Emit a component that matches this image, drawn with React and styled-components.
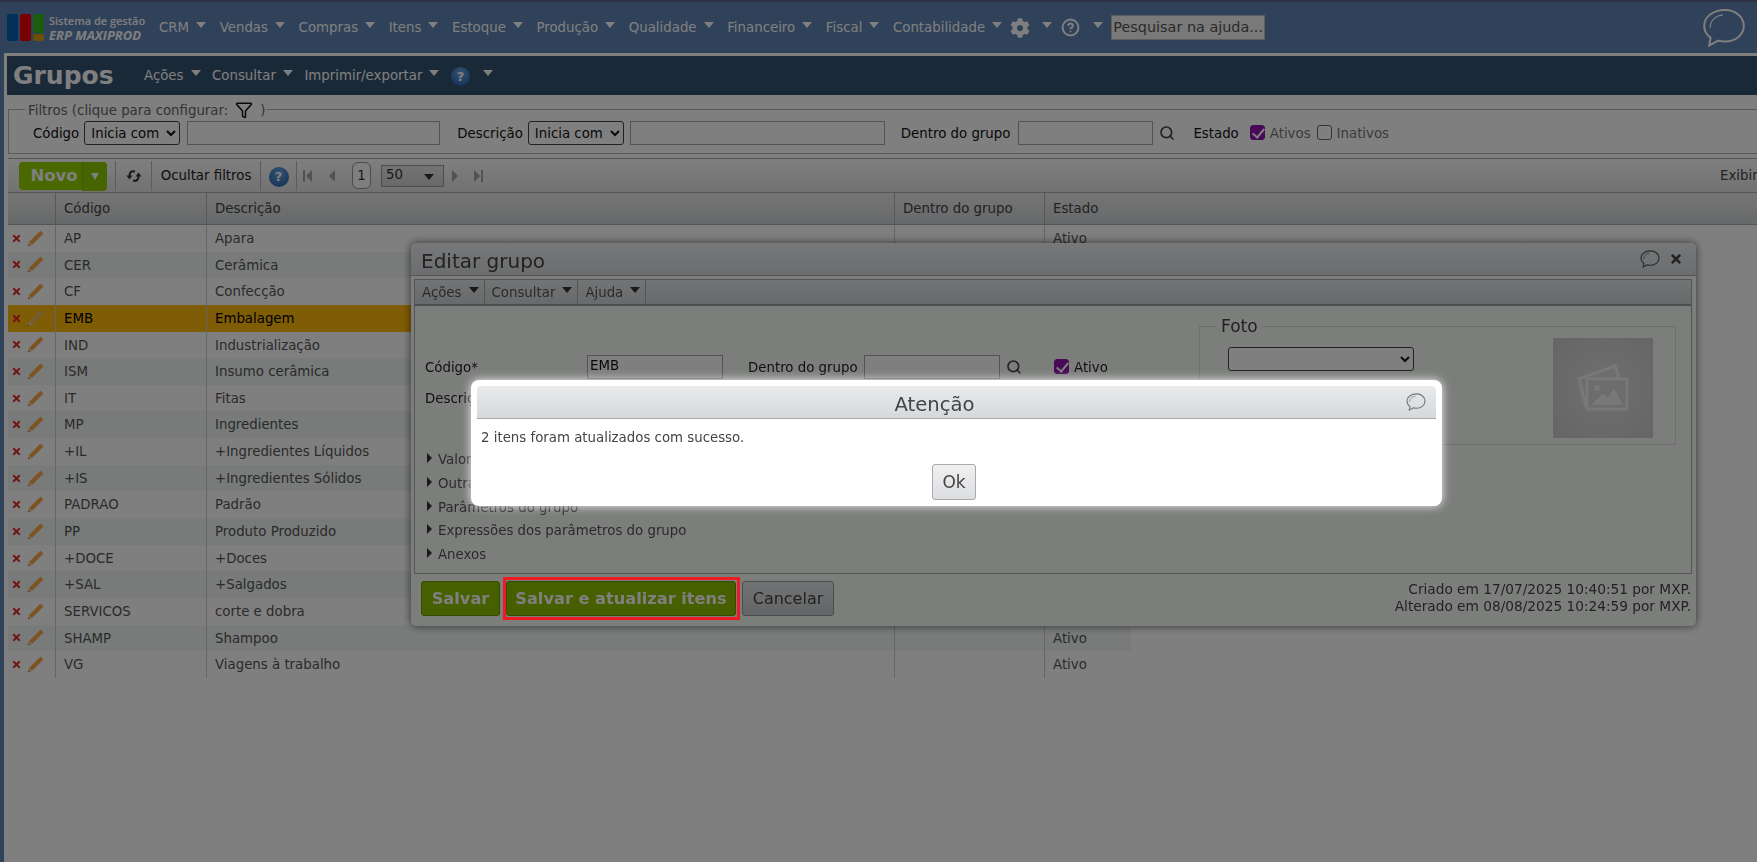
import React from 'react';
import styled, { createGlobalStyle } from 'styled-components';
import { FaCog, FaTimes } from 'react-icons/fa';
import { CircleHelp, Funnel, Search } from 'lucide-react';

const GlobalStyle = createGlobalStyle`
  html, body { margin: 0; padding: 0; height: 100%; overflow: hidden; }
  body { font-family: "DejaVu Sans", sans-serif; font-size: 13.33px; color: #555; background: #5e84b2; }
  * { box-sizing: border-box; }
`;

const Shell = styled.div`
  width: 1757px;
  height: 862px;
  overflow: hidden;
  background: #5e84b2;
  border-top: 2px solid #5a6288;
`;

const TopBar = styled.header`
  height: 51px;
  display: flex;
  align-items: center;
  padding-left: 7px;
`;

const Logo = styled.div`
  display: flex;
  align-items: center;
  gap: 5px;
  width: 152px;
  flex: none;
`;

const LogoMark = styled.div`
  display: grid;
  grid-template-columns: 11px 11px 11px;
  grid-template-rows: 19px 7px;
  gap: 1px 2px;
`;

const LogoBlock = styled.span`
  background: ${p => p.$color};
  border-radius: 2px;
  grid-row: ${p => p.$row || 'auto'};
`;

const LogoText = styled.div`
  font-family: "Open Sans", sans-serif;
  color: #fff;
  display: flex;
  flex-direction: column;
  line-height: 15px;
  font-size: 11px;
  font-weight: 600;
  white-space: nowrap;
  strong { font-size: 13px; font-style: italic; font-weight: 700; }
`;

const Nav = styled.nav`
  display: flex;
  align-items: center;
  gap: 13.6px;
`;

const NavItem = styled.span`
  display: flex;
  align-items: center;
  gap: ${p => p.$gap || 7}px;
  margin-left: ${p => p.$ml || 0}px;
  color: #fff;
  white-space: nowrap;
`;

const Caret = styled.i`
  display: block;
  width: 0;
  height: 0;
  border-left: 5px solid transparent;
  border-right: 5px solid transparent;
  border-top: 6px solid ${p => p.$color || '#fff'};
  margin-top: ${p => p.$mt === undefined ? -5 : p.$mt}px;
`;

const HelpSearch = styled.div`
  width: 154px;
  height: 25px;
  margin-left: 8px;
  background: #f2f2f2;
  border: 1px solid #bbb;
  color: #555;
  font-size: 14.4px;
  line-height: 23px;
  padding-left: 1px;
  white-space: nowrap;
  overflow: hidden;
`;

const TopBubble = styled.div`
  margin-left: auto;
  margin-right: 11px;
  display: flex;
`;

const Panel = styled.main`
  margin-left: 4px;
  padding: 3px 0 0 3px;
  background: #fff;
  height: 809px;
`;

const TitleBar = styled.div`
  height: 39px;
  background: #345270;
  display: flex;
  align-items: center;
  padding-left: 6px;
`;

const PageTitle = styled.h1`
  margin: 0 30px 0 0;
  width: 101px;
  font-size: 25px;
  font-weight: 700;
  color: #fff;
  line-height: 39px;
`;

const SubNav = styled.nav`
  display: flex;
  align-items: center;
  gap: 11.5px;
`;

const HelpBadge = styled.span`
  width: ${p => p.$size || 19}px;
  height: ${p => p.$size || 19}px;
  margin-top: 2px;
  border-radius: 50%;
  background: radial-gradient(circle at 50% 30%, #6aa4e0, #1e5caa);
  color: #fff;
  font-weight: 700;
  font-size: 13px;
  display: flex;
  align-items: center;
  justify-content: center;
  flex: none;
`;

const FilterSet = styled.fieldset`
  margin: 3px 0 0 1px;
  padding: 0 0 0 16px;
  height: 56px;
  border: 1px solid #b4b4b4;
  border-right: none;
`;

const FilterLegend = styled.legend`
  margin-left: 0;
  padding: 2px 1px 0 3px;
  display: flex;
  align-items: center;
  gap: 7px;
  height: 22px;
  color: #666;
  white-space: nowrap;
`;

const FilterRow = styled.div`
  display: flex;
  align-items: center;
  height: 26px;
  margin: 0 0 0 8px;
`;

const FieldLabel = styled.label`
  color: #111;
  margin-left: ${p => p.$ml || 0}px;
  margin-right: ${p => p.$mr === undefined ? 5 : p.$mr}px;
  white-space: nowrap;
`;

const Select = styled.select`
  width: ${p => p.$w}px;
  height: 24px;
  border: 1px solid #444;
  border-radius: 3px;
  background: #fff;
  font-family: "DejaVu Sans", sans-serif;
  font-size: 13.33px;
  color: #111;
  padding: 0 0 0 2px;
  margin-left: ${p => p.$ml || 0}px;
  margin-top: ${p => p.$mt || 0}px;
  flex: none;
`;

const TextInput = styled.div`
  width: ${p => p.$w}px;
  height: 24px;
  border: 1px solid #a6a6a6;
  background: #fff;
  color: #111;
  line-height: 20px;
  padding-left: 2px;
  margin-left: ${p => p.$ml || 0}px;
  flex: none;
`;

const SearchIcon = styled(Search)`
  color: #444;
  margin-left: ${p => p.$ml || 6}px;
  flex: none;
`;

const Check = styled.input`
  appearance: none;
  width: 15px;
  height: 15px;
  margin: -2px 5px 0 ${p => p.$ml || 0}px;
  border: 1px solid #666;
  border-radius: 3px;
  background: #fff;
  position: relative;
  flex: none;
  &:checked { background: #8e12ac; border-color: #8e12ac; }
  &:checked::after {
    content: '';
    position: absolute;
    left: 4px;
    top: 0;
    width: 5px;
    height: 10px;
    border: solid #fff;
    border-width: 0 2px 2px 0;
    transform: rotate(40deg);
  }
`;

const CheckLabel = styled.span`
  color: ${p => p.$color || '#777'};
  white-space: nowrap;
`;

const Toolbar = styled.div`
  margin: 4px 0 0 1px;
  height: 34px;
  display: flex;
  align-items: center;
  border-top: 1px solid #a8a8a8;
  background: linear-gradient(#fff, #e4e4e4);
  color: #222;
  padding-left: 11px;
`;

const NewButton = styled.div`
  width: 88px;
  height: 28px;
  display: flex;
  border-radius: 4px;
  background: #92d000;
  color: #fff;
  font-weight: 700;
  font-size: 16.5px;
  flex: none;
  div:first-child { width: 63px; padding-left: 7px; text-align: center; line-height: 28px; }
  div:last-child {
    flex: 1;
    height: 29px;
    background: #8cc800;
    border-left: 1px solid #7eb400;
    border-radius: 0 4px 4px 0;
    display: flex;
    align-items: center;
    justify-content: center;
  }
`;

const SmallCaret = styled.i`
  display: block;
  width: 0;
  height: 0;
  border-left: 4px solid transparent;
  border-right: 4px solid transparent;
  border-top: 7px solid #fff;
`;

const ToolCell = styled.div`
  height: 30px;
  display: flex;
  align-items: center;
  justify-content: center;
  width: ${p => p.$w}px;
  border-left: 1px solid #bbb;
  margin-left: ${p => p.$ml || 0}px;
  white-space: nowrap;
  flex: none;
`;

const PageIcon = styled.svg`
  margin-left: ${p => p.$ml}px;
  flex: none;
`;

const PageNumber = styled.div`
  width: 19px;
  height: 27px;
  margin-left: 16px;
  border: 1px solid #999;
  border-radius: 6px;
  background: #fff;
  text-align: center;
  line-height: 25px;
  color: #333;
  flex: none;
`;

const PageSize = styled.div`
  width: 63px;
  height: 22px;
  margin-left: 10px;
  border: 1px solid #999;
  background: linear-gradient(#e8e8e8, #d2d2d2);
  display: flex;
  align-items: center;
  justify-content: space-between;
  padding: 0 9px 0 4px;
  line-height: 17px;
  color: #333;
  flex: none;
  span { margin-top: -3px; }
`;

const ShowingText = styled.div`
  margin-left: auto;
  width: 37px;
  overflow: hidden;
  white-space: nowrap;
  color: #444;
  flex: none;
`;

const HeaderRow = styled.div`
  display: grid;
  grid-template-columns: 48px 151px 688px 150px 1fr;
  height: 33px;
  margin-left: 1px;
  background: linear-gradient(#ececec, #ced1d3);
  border-top: 1px solid #aaa;
  border-bottom: 1px solid #aaa;
`;

const HeadCell = styled.div`
  padding-left: 8px;
  line-height: 31px;
  color: #444;
  border-right: 1px solid #b0b0b0;
  white-space: nowrap;
  &:last-child { border-right: none; }
`;

const Row = styled.div`
  display: grid;
  grid-template-columns: 48px 151px 688px 150px 86px;
  width: 1123px;
  height: 26.65px;
  margin-left: 1px;
  background: ${p => (p.$selected ? '#ffb80c' : p.$alt ? '#f0f6f2' : '#fff')};
  color: ${p => (p.$selected ? '#000' : '#555')};
`;

const Cell = styled.div`
  padding-left: 8px;
  line-height: 27px;
  border-right: 1px solid ${p => (p.$last ? 'transparent' : '#ccc')};
  white-space: nowrap;
  overflow: hidden;
`;

const ActionCell = styled.div`
  display: flex;
  align-items: center;
  padding-left: 3px;
  gap: 5px;
  border-right: 1px solid #ccc;
`;

const Overlay = styled.div`
  position: fixed;
  inset: 0;
  background: rgba(0, 0, 0, 0.5);
  z-index: 10;
`;

const EditDialog = styled.section`
  position: fixed;
  left: 411px;
  top: 243px;
  width: 1285px;
  height: 383px;
  background: #f9fcf9;
  border-radius: 5px;
  box-shadow: 0 0 8px rgba(0, 0, 0, 0.6);
  display: flex;
  flex-direction: column;
  z-index: 5;
`;

const DialogTitle = styled.div`
  height: 33px;
  background: linear-gradient(#eef0f2, #d8dade);
  border-bottom: 1px solid #aaa;
  border-radius: 5px 5px 0 0;
  display: flex;
  align-items: center;
  padding: 0 12px 0 10px;
  font-size: 20px;
  color: #444;
  flex: none;
  span { margin: 4px auto 0 0; }
`;

const CloseIcon = styled(FaTimes)`
  margin-left: 9px;
  margin-right: 1px;
`;

const DialogBody = styled.div`
  margin: 3px 4px 0 3px;
  height: 295px;
  border: 1px solid #aaa;
  display: flex;
  flex-direction: column;
  flex: none;
`;

const DialogMenu = styled.div`
  height: 26px;
  display: flex;
  background: linear-gradient(#e6e8ea, #d2d4d8);
  border-bottom: 2px solid #9a9ea2;
  flex: none;
`;

const DialogMenuItem = styled.div`
  display: flex;
  align-items: center;
  gap: 7px;
  padding: 0 5px 0 7px;
  border-right: 1px solid #aaa;
  color: #555;
  height: 100%;
`;

const DialogContent = styled.div`
  display: flex;
  flex: 1;
`;

const FormSide = styled.div`
  flex: 1;
  padding: 49px 0 0 10px;
`;

const FormRow = styled.div`
  display: flex;
  align-items: center;
  height: 24px;
  margin-bottom: 7px;
  color: #222;
`;

const FormLabel = styled.div`
  width: ${p => p.$w}px;
  margin-left: ${p => p.$ml || 0}px;
  flex: none;
  white-space: nowrap;
  color: #222;
`;

const Accordion = styled.div`
  margin-top: 38px;
  margin-left: 2px;
`;

const AccordionItem = styled.div`
  height: 23.7px;
  display: flex;
  align-items: center;
  gap: 6px;
  color: #555;
  &::before {
    content: '';
    border-top: 5px solid transparent;
    border-bottom: 5px solid transparent;
    border-left: 5px solid #333;
    margin-top: -3px;
  }
`;

const PhotoSet = styled.fieldset`
  margin: 10px 15px 0 0;
  padding: 0 22px 0 28px;
  width: 477px;
  height: 129px;
  border: 1px solid #ddd;
  display: flex;
  justify-content: space-between;
  align-items: flex-start;
  flex: none;
`;

const PhotoLegend = styled.legend`
  margin-left: -11px;
  padding: 0 4px;
  font-size: 17px;
  line-height: 20px;
  color: #444;
`;

const PhotoBox = styled.div`
  width: 100px;
  height: 100px;
  margin-top: 2px;
  background: radial-gradient(circle, #e0e0e0, #cbcbcb);
  display: flex;
  align-items: center;
  justify-content: center;
  flex: none;
`;

const DialogFooter = styled.div`
  display: flex;
  align-items: flex-start;
  padding: 7px 5px 0 10px;
  gap: 6px;
  flex: 1;
`;

const GreenButton = styled.button`
  height: 35px;
  padding: 0;
  width: ${p => p.$w}px;
  border: 1px solid #6d9400;
  border-radius: 3px;
  background: #8cc000;
  color: #fff;
  font-family: "DejaVu Sans", sans-serif;
  font-weight: 700;
  font-size: 16.2px;
  flex: none;
`;

const GrayButton = styled.button`
  width: 92px;
  height: 35px;
  padding: 0;
  border: 1px solid #999;
  border-radius: 3px;
  background: linear-gradient(#e4e6e8, #c8cace);
  color: #444;
  font-family: "DejaVu Sans", sans-serif;
  font-size: 16px;
  flex: none;
`;

const AuditText = styled.div`
  margin-left: auto;
  text-align: right;
  font-size: 13.7px;
  line-height: 17px;
  color: #444;
  white-space: nowrap;
`;

const AlertBox = styled.div`
  position: fixed;
  left: 471px;
  top: 380px;
  width: 971px;
  height: 126px;
  padding: 6px 6px 0;
  background: #fff;
  border-radius: 8px;
  box-shadow: 0 0 10px rgba(255, 255, 255, 0.9);
  z-index: 20;
  display: flex;
  flex-direction: column;
`;

const AlertTitle = styled.div`
  height: 33px;
  background: linear-gradient(#e8eaec, #d6d9dc);
  border-bottom: 1px solid #aaa;
  border-radius: 4px 4px 0 0;
  display: flex;
  align-items: center;
  justify-content: center;
  padding: 4px 44px 0 0;
  font-size: 19.6px;
  color: #444;
  position: relative;
  flex: none;
  svg { position: absolute; right: 10px; top: 7px; }
`;

const AlertText = styled.div`
  margin: 10px 0 0 4px;
  color: #444;
  line-height: 18px;
`;

const AlertActions = styled.div`
  display: flex;
  justify-content: center;
  margin: 17px 5px 0 0;
`;

const OkButton = styled.button`
  width: 44px;
  height: 36px;
  padding: 0;
  border: 1px solid #aaa;
  border-radius: 3px;
  background: linear-gradient(#f0f0f0, #dcdee2);
  color: #444;
  font-family: "DejaVu Sans", sans-serif;
  font-size: 17px;
`;

const Highlight = styled.div`
  position: fixed;
  left: 503px;
  top: 577px;
  width: 237px;
  height: 43px;
  border: 3px solid #ed1c24;
  z-index: 30;
`;

const Bubble = ({ size = 44, color = '#fff', width = 2 }) => (
  <svg width={size} height={size * 0.9} viewBox="0 0 44 40" fill="none" stroke={color} strokeWidth={width}>
    <path d="M23 2C11 2 2 9 2 18c0 5 2.500 9.300 6.500 12L7 38l9-5c2 .5 4.500 .8 7 .8 11 0 19-7 19-15.800S34 2 23 2z" />
    <path d="M8 20c0-7 5-12 13-13" strokeWidth={width * 0.6} />
  </svg>
);

const Pencil = ({ faded }) => (
  <svg width="17" height="17" viewBox="0 0 17 17">
    <path d="M13.500 .5 L16.500 3.500 L5 15 L1.500 16 L1 15.500 L2 12 Z" fill={faded ? '#f0b868' : '#f8a848'} />
    <path d="M2 12 L1 16 L5 15 Z" fill="#f4d9b0" />
    <path d="M1 16 L1.500 14.500 L2.500 15.500 Z" fill="#444" />
  </svg>
);

const RefreshIcon = () => (
  <svg width="16" height="14" viewBox="0 0 16 14" fill="#333" stroke="none">
    <path d="M9 2.500C5.500 1.500 3.500 3 3.500 7" fill="none" stroke="#333" strokeWidth="2" />
    <path d="M.5 6.500h6l-3 4z" />
    <path d="M7 11.500c3.500 1 5.500-.5 5.500-4.500" fill="none" stroke="#333" strokeWidth="2" />
    <path d="M9.500 7.500h6l-3-4z" />
  </svg>
);

const PagerIcon = ({ ml, dir, bar }) => (
  <PageIcon $ml={ml} width="10" height="12" viewBox="0 0 10 12" fill="#a4a4a4">
    {dir === 'left' ? <path d="M9 0v12L3 6z" /> : <path d="M1 0v12l6-6z" />}
    {bar && <rect x={dir === 'left' ? 0 : 8} y="0" width="2" height="12" />}
  </PageIcon>
);

const PhotoIcon = () => (
  <svg width="52" height="52" viewBox="0 0 52 52" fill="none" stroke="#f0f0f0" strokeWidth="3">
    <path d="M9 44 L2 17 L38 4 L42 16" />
    <rect x="10" y="17" width="40" height="30" fill="#d8d8d8" />
    <circle cx="20" cy="26" r="3" fill="#f0f0f0" stroke="none" />
    <path d="M14 43 L26 31 L31 36 L37 26 L46 43 Z" fill="#f0f0f0" stroke="none" />
  </svg>
);

const menus = ['CRM', 'Vendas', 'Compras', 'Itens', 'Estoque', 'Produção', 'Qualidade', 'Financeiro', 'Fiscal', 'Contabilidade'];

const groups = [
  ['AP', 'Apara'],
  ['CER', 'Cerâmica'],
  ['CF', 'Confecção'],
  ['EMB', 'Embalagem'],
  ['IND', 'Industrialização'],
  ['ISM', 'Insumo cerâmica'],
  ['IT', 'Fitas'],
  ['MP', 'Ingredientes'],
  ['+IL', '+Ingredientes Líquidos'],
  ['+IS', '+Ingredientes Sólidos'],
  ['PADRAO', 'Padrão'],
  ['PP', 'Produto Produzido'],
  ['+DOCE', '+Doces'],
  ['+SAL', '+Salgados'],
  ['SERVICOS', 'corte e dobra'],
  ['SHAMP', 'Shampoo'],
  ['VG', 'Viagens à trabalho'],
];

const App = () => (
  <Shell>
    <GlobalStyle />
    <TopBar>
      <Logo>
        <LogoMark>
          <LogoBlock $color="#0060b4" $row="1 / 3" />
          <LogoBlock $color="#38b820" />
          <LogoBlock $color="#f00000" $row="1 / 3" />
          <LogoBlock $color="#d8a000" />
        </LogoMark>
        <LogoText>
          <span>Sistema de gestão</span>
          <strong>ERP MAXIPROD</strong>
        </LogoText>
      </Logo>
      <Nav>
        {menus.map(m => (
          <NavItem key={m}>{m}<Caret /></NavItem>
        ))}
        <NavItem $gap={12} $ml={-6}><FaCog size={20} color="#fff" /><Caret /></NavItem>
        <NavItem $gap={13} $ml={-4}><CircleHelp size={19} color="#fff" strokeWidth={2.500} /><Caret /></NavItem>
      </Nav>
      <HelpSearch>Pesquisar na ajuda...</HelpSearch>
      <TopBubble><Bubble /></TopBubble>
    </TopBar>

    <Panel>
      <TitleBar>
        <PageTitle>Grupos</PageTitle>
        <SubNav>
          <NavItem>Ações<Caret /></NavItem>
          <NavItem>Consultar<Caret /></NavItem>
          <NavItem>Imprimir/exportar<Caret /></NavItem>
          <NavItem $gap={13}><HelpBadge>?</HelpBadge><Caret /></NavItem>
        </SubNav>
      </TitleBar>

      <FilterSet>
        <FilterLegend>Filtros (clique para configurar: <Funnel size={18} color="#111" /> )</FilterLegend>
        <FilterRow>
          <FieldLabel>Código</FieldLabel>
          <Select $w={96} defaultValue="Inicia com"><option>Inicia com</option></Select>
          <TextInput $w={253} $ml={7} />
          <FieldLabel $ml={17}>Descrição</FieldLabel>
          <Select $w={96} defaultValue="Inicia com"><option>Inicia com</option></Select>
          <TextInput $w={255} $ml={6} />
          <FieldLabel $ml={16} $mr={8}>Dentro do grupo</FieldLabel>
          <TextInput $w={135} />
          <SearchIcon size={16} strokeWidth={2.500} />
          <FieldLabel $ml={18} $mr={11}>Estado</FieldLabel>
          <Check type="checkbox" defaultChecked />
          <CheckLabel>Ativos</CheckLabel>
          <Check type="checkbox" $ml={6} />
          <CheckLabel>Inativos</CheckLabel>
        </FilterRow>
      </FilterSet>

      <Toolbar>
        <NewButton>
          <div>Novo</div>
          <div><SmallCaret /></div>
        </NewButton>
        <ToolCell $w={36} $ml={8}><RefreshIcon /></ToolCell>
        <ToolCell $w={109}>Ocultar filtros</ToolCell>
        <ToolCell $w={36}><HelpBadge $size={20}>?</HelpBadge></ToolCell>
        <ToolCell $w={1} />
        <PagerIcon ml={6} dir="left" bar />
        <PagerIcon ml={13} dir="left" />
        <PageNumber>1</PageNumber>
        <PageSize><span>50</span><Caret $color="#333" $mt={3} /></PageSize>
        <PagerIcon ml={7} dir="right" />
        <PagerIcon ml={12} dir="right" bar />
        <ShowingText>Exibindo 1-17 de 17</ShowingText>
      </Toolbar>

      <HeaderRow>
        <HeadCell />
        <HeadCell>Código</HeadCell>
        <HeadCell>Descrição</HeadCell>
        <HeadCell>Dentro do grupo</HeadCell>
        <HeadCell>Estado</HeadCell>
      </HeaderRow>

      {groups.map(([code, name], i) => (
        <Row key={code} $alt={i % 2 === 1} $selected={code === 'EMB'}>
          <ActionCell>
            <FaTimes size={11} color="#e02828" />
            <Pencil faded={code === 'EMB'} />
          </ActionCell>
          <Cell>{code}</Cell>
          <Cell>{name}</Cell>
          <Cell />
          <Cell $last>Ativo</Cell>
        </Row>
      ))}
    </Panel>

    <EditDialog>
      <DialogTitle>
        <span>Editar grupo</span>
        <Bubble size={20} color="#555" width={2.500} />
        <CloseIcon size={14} color="#444" />
      </DialogTitle>
      <DialogBody>
        <DialogMenu>
          <DialogMenuItem>Ações<Caret $color="#333" /></DialogMenuItem>
          <DialogMenuItem>Consultar<Caret $color="#333" /></DialogMenuItem>
          <DialogMenuItem>Ajuda<Caret $color="#333" /></DialogMenuItem>
        </DialogMenu>
        <DialogContent>
          <FormSide>
            <FormRow>
              <FormLabel $w={162}>Código*</FormLabel>
              <TextInput $w={136}>EMB</TextInput>
              <FormLabel $w={116} $ml={25}>Dentro do grupo</FormLabel>
              <TextInput $w={136} />
              <SearchIcon size={16} strokeWidth={2.500} />
              <Check type="checkbox" defaultChecked $ml={32} />
              <CheckLabel $color="#222">Ativo</CheckLabel>
            </FormRow>
            <FormRow>
              <FormLabel $w={162}>Descrição*</FormLabel>
            </FormRow>
            <Accordion>
              <AccordionItem>Valores padrão</AccordionItem>
              <AccordionItem>Outras informações</AccordionItem>
              <AccordionItem>Parâmetros do grupo</AccordionItem>
              <AccordionItem>Expressões dos parâmetros do grupo</AccordionItem>
              <AccordionItem>Anexos</AccordionItem>
            </Accordion>
          </FormSide>
          <PhotoSet>
            <PhotoLegend>Foto</PhotoLegend>
            <Select $w={186} $mt={11}><option /></Select>
            <PhotoBox><PhotoIcon /></PhotoBox>
          </PhotoSet>
        </DialogContent>
      </DialogBody>
      <DialogFooter>
        <GreenButton $w={79}>Salvar</GreenButton>
        <GreenButton $w={230}>Salvar e atualizar itens</GreenButton>
        <GrayButton>Cancelar</GrayButton>
        <AuditText>
          Criado em 17/07/2025 10:40:51 por MXP.<br />
          Alterado em 08/08/2025 10:24:59 por MXP.
        </AuditText>
      </DialogFooter>
    </EditDialog>

    <Overlay />

    <AlertBox>
      <AlertTitle>
        Atenção
        <Bubble size={20} color="#777" width={2.500} />
      </AlertTitle>
      <AlertText>2 itens foram atualizados com sucesso.</AlertText>
      <AlertActions><OkButton>Ok</OkButton></AlertActions>
    </AlertBox>

    <Highlight />
  </Shell>
);

export default App;
